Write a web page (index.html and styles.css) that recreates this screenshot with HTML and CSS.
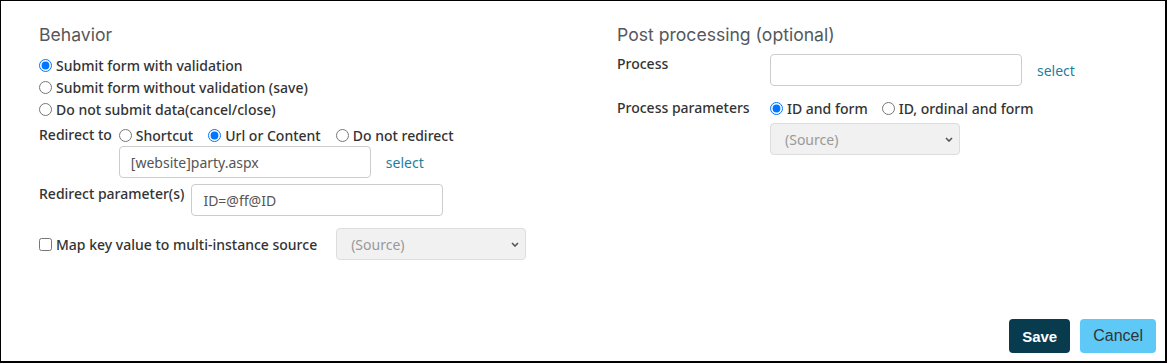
FILE: index.html
```html
<!DOCTYPE html>
<html lang="en">
<head>
    <meta charset="UTF-8">
    <meta name="viewport" content="width=device-width, initial-scale=1.0">
    <title>Form behavior</title>
    <link rel="stylesheet" href="styles.css">
</head>
<body>
    <div class="panel">
        <div class="columns">
            <section class="col">
                <h2>Behavior</h2>
                <div class="behavior-list">
                    <label class="opt"><input type="radio" name="behavior" checked>Submit form with validation</label>
                    <label class="opt"><input type="radio" name="behavior">Submit form without validation (save)</label>
                    <label class="opt"><input type="radio" name="behavior">Do not submit data(cancel/close)</label>
                </div>

                <div class="row redirect-to">
                    <span class="lbl">Redirect to</span>
                    <div class="stack">
                        <div class="radios">
                            <label class="opt"><input type="radio" name="redirect">Shortcut</label>
                            <label class="opt"><input type="radio" name="redirect" checked>Url or Content</label>
                            <label class="opt"><input type="radio" name="redirect">Do not redirect</label>
                        </div>
                        <div class="field-line">
                            <input type="text" class="text-input" value="[website]party.aspx">
                            <a href="#" class="link">select</a>
                        </div>
                    </div>
                </div>

                <div class="row params">
                    <span class="lbl top">Redirect parameter(s)</span>
                    <input type="text" class="text-input" value="ID=@ff@ID">
                </div>

                <div class="row map">
                    <label class="opt"><input type="checkbox">Map key value to multi-instance source</label>
                    <div class="select-wrap">
                        <select disabled><option>(Source)</option></select>
                        <svg class="chevron" width="8" height="5" viewBox="0 0 8 5"><path d="M1 1l3 3 3-3" fill="none" stroke="#555" stroke-width="1.6"/></svg>
                    </div>
                </div>
            </section>

            <section class="col">
                <h2>Post processing (optional)</h2>
                <div class="prow process">
                    <span class="plabel">Process</span>
                    <div class="field-line">
                        <input type="text" class="text-input">
                        <a href="#" class="link">select</a>
                    </div>
                </div>
                <div class="prow process-params">
                    <span class="plabel mid">Process parameters</span>
                    <div class="stack">
                        <div class="radios">
                            <label class="opt"><input type="radio" name="params" checked>ID and form</label>
                            <label class="opt"><input type="radio" name="params">ID, ordinal and form</label>
                        </div>
                        <div class="select-wrap source">
                            <select disabled><option>(Source)</option></select>
                            <svg class="chevron" width="8" height="5" viewBox="0 0 8 5"><path d="M1 1l3 3 3-3" fill="none" stroke="#555" stroke-width="1.6"/></svg>
                        </div>
                    </div>
                </div>
            </section>
        </div>

        <div class="actions">
            <button class="btn save">Save</button>
            <button class="btn cancel">Cancel</button>
        </div>
    </div>
</body>
</html>
```

FILE: styles.css
```css
body {
    margin: 0;
    font-family: "Noto Sans", "Open Sans", sans-serif;
    font-size: 14px;
    font-weight: 500;
    color: #333;
    background-color: white;
}
.panel {
    width: 1167px;
    height: 363px;
    box-sizing: border-box;
    border-style: solid;
    border-color: #000;
    border-width: 1px 2px 2px 1px;
    padding: 23px 9px 8px 38px;
    display: flex;
    flex-direction: column;
}
.columns {
    display: grid;
    grid-template-columns: 578px 1fr;
}
h2 {
    margin: 0;
    font-family: Inter, "Liberation Sans", sans-serif;
    font-size: 17.6px;
    font-weight: 400;
    line-height: 22px;
    color: #55585c;
}
.behavior-list {
    margin-top: 8px;
    display: flex;
    flex-direction: column;
}
.opt {
    display: flex;
    align-items: center;
    height: 22px;
    white-space: nowrap;
}
.opt input {
    margin: 0 4px 0 0;
    width: 13px;
    height: 13px;
}
.row {
    display: flex;
    gap: 7px;
}
.lbl {
    line-height: 22px;
    white-space: nowrap;
}
.lbl.top {
    line-height: 20px;
}
.redirect-to {
    margin-top: 4px;
}
.stack {
    display: flex;
    flex-direction: column;
}
.radios {
    display: flex;
    gap: 15px;
}
.process-params .radios {
    gap: 14px;
}
.field-line {
    display: flex;
    align-items: center;
    gap: 15px;
}
.text-input {
    width: 252px;
    height: 32px;
    box-sizing: border-box;
    padding: 0 11px;
    border: 1px solid #ccc;
    border-radius: 4px;
    font-family: inherit;
    font-size: 14px;
    font-weight: 400;
    color: #555;
    background-color: white;
}
.link {
    color: #1f7e9f;
    font-weight: 400;
    text-decoration: none;
}
.params {
    margin-top: 6px;
}
.map {
    margin-top: 12px;
    align-items: center;
    gap: 19px;
}
.select-wrap {
    position: relative;
    width: 190px;
    height: 32px;
}
.select-wrap select {
    width: 100%;
    height: 100%;
    appearance: none;
    -webkit-appearance: none;
    padding: 0 14px;
    border: 1px solid #ddd;
    border-radius: 4px;
    background-color: #f1f1f1;
    font-family: inherit;
    font-size: 14px;
    font-weight: 400;
    color: #999;
    opacity: 1;
}
.chevron {
    position: absolute;
    right: 7px;
    top: 14px;
}
.prow {
    display: flex;
}
.plabel {
    width: 153px;
    flex-shrink: 0;
    line-height: 20px;
}
.plabel.mid {
    line-height: 22px;
}
.process {
    margin-top: 8px;
}
.process-params {
    margin-top: 11px;
}
.source {
    margin-top: 4px;
}
.actions {
    margin-top: auto;
    display: flex;
    justify-content: flex-end;
    gap: 10px;
}
.btn {
    height: 34px;
    padding: 0 13px;
    border: none;
    border-radius: 4px;
    font-family: "Liberation Sans", Arial, sans-serif;
    font-size: 16px;
    font-weight: 400;
    cursor: pointer;
}
.save {
    background-color: #083b4e;
    color: white;
    font-weight: bold;
    font-size: 15px;
}
.cancel {
    background-color: #5ec9f7;
    color: #333;
}
```
